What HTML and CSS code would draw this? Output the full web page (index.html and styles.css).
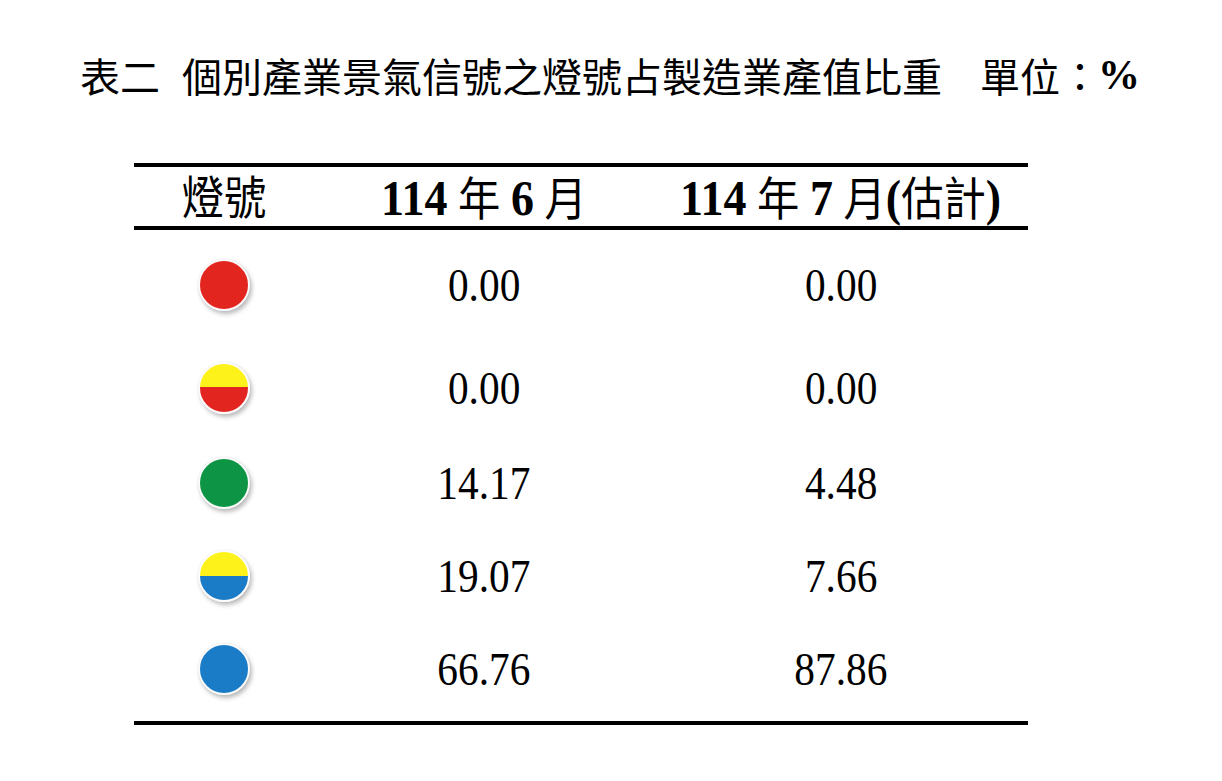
FILE: index.html
```html
<!DOCTYPE html>
<html lang="zh-Hant">
<head>
<meta charset="utf-8">
<link rel="stylesheet" href="styles.css">
</head>
<body>
<div class="page">
  <h1 class="title"><span>表二</span><span class="gap1">個別產業景氣信號之燈號占製造業產值比重</span><span class="gap2">單位：</span><b class="pct">%</b></h1>
  <table class="tbl">
    <thead>
      <tr>
        <th class="c1"><span class="hx">燈號</span></th>
        <th class="c2"><span class="hx"><b>114</b> 年 <b>6</b> 月</span></th>
        <th class="c3"><span class="hx"><b>114</b> 年 <b>7</b> 月<b>(</b>估計<b>)</b></span></th>
      </tr>
    </thead>
    <tbody>
      <tr class="r1">
        <td class="c1"><span class="dot red"></span></td>
        <td class="c2"><span class="sx num">0.00</span></td>
        <td class="c3"><span class="sx num">0.00</span></td>
      </tr>
      <tr class="r2">
        <td class="c1"><span class="dot yr"></span></td>
        <td class="c2"><span class="sx num">0.00</span></td>
        <td class="c3"><span class="sx num">0.00</span></td>
      </tr>
      <tr class="r3">
        <td class="c1"><span class="dot green"></span></td>
        <td class="c2"><span class="sx num">14.17</span></td>
        <td class="c3"><span class="sx num">4.48</span></td>
      </tr>
      <tr class="r4">
        <td class="c1"><span class="dot yb"></span></td>
        <td class="c2"><span class="sx num">19.07</span></td>
        <td class="c3"><span class="sx num">7.66</span></td>
      </tr>
      <tr class="r5">
        <td class="c1"><span class="dot blue"></span></td>
        <td class="c2"><span class="sx num">66.76</span></td>
        <td class="c3"><span class="sx num">87.86</span></td>
      </tr>
    </tbody>
  </table>
</div>
</body>
</html>
```

FILE: styles.css
```css
html, body {
  margin: 0;
  padding: 0;
  background: #ffffff;
}
body {
  width: 1222px;
  height: 781px;
  overflow: hidden;
  color: #000;
  font-family: "Liberation Serif", "Noto Sans CJK TC", serif;
}
.page {
  padding-top: 54px;
}
.title {
  margin: 0 0 0 80px;
  font-family: "Noto Sans CJK TC", sans-serif;
  font-weight: 400;
  font-size: 40px;
  line-height: 42px;
  height: 42px;
  white-space: nowrap;
  display: flex;
  align-items: center;
}
.gap1 { margin-left: 22px; }
.gap2 { margin-left: 38px; }
.pct {
  font-family: "Liberation Serif", serif;
  font-weight: 700;
  font-size: 42px;
  margin-left: -2px;
}
.tbl {
  margin: 67px 0 0 134px;
  width: 894px;
  border-collapse: collapse;
  table-layout: fixed;
}
.tbl th, .tbl td {
  padding: 0;
  text-align: center;
  vertical-align: middle;
}
.c1 { width: 180px; }
.c2 { width: 340px; }
.c3 { width: 374px; }
thead tr {
  height: 63px;
  border-top: 4px solid #000;
  border-bottom: 4px solid #000;
}
thead th {
  font-weight: 400;
  font-size: 46px;
  line-height: 50px;
  font-family: "Liberation Serif", "Noto Sans CJK TC", serif;
}
thead th b {
  font-weight: 700;
  font-family: "Liberation Serif", serif;
  font-size: 50px;
}
.hx {
  display: inline-block;
  transform: scaleX(0.92);
  white-space: nowrap;
  position: relative;
  top: 2px;
}
.sx {
  display: inline-block;
  transform: scaleX(0.88);
  white-space: nowrap;
}
.num {
  font-size: 47px;
  line-height: 48px;
  font-family: "Liberation Serif", serif;
}
tbody tr.r1 { height: 111px; }
tbody tr.r2 { height: 97px; }
tbody tr.r3 { height: 93px; }
tbody tr.r4 { height: 94px; }
tbody tr.r5 { height: 100px; }
tbody tr.r5 td { padding-bottom: 6px; }
tbody tr:last-child { border-bottom: 4px solid #000; }
.dot {
  display: inline-block;
  width: 48px;
  height: 48px;
  border-radius: 50%;
  border: 2px solid #fbfbfb;
  box-shadow: 2px 3px 4px rgba(60, 60, 60, 0.35), 0 0 1px rgba(0,0,0,0.15);
  vertical-align: middle;
}
.red { background: #e3251f; }
.green { background: #0d9444; }
.blue { background: #1a7cc6; }
.yr { background: linear-gradient(to bottom, #fdf21a 0 48%, #e3251f 48% 100%); }
.yb { background: linear-gradient(to bottom, #fdf21a 0 50%, #1a7cc6 50% 100%); }
```
